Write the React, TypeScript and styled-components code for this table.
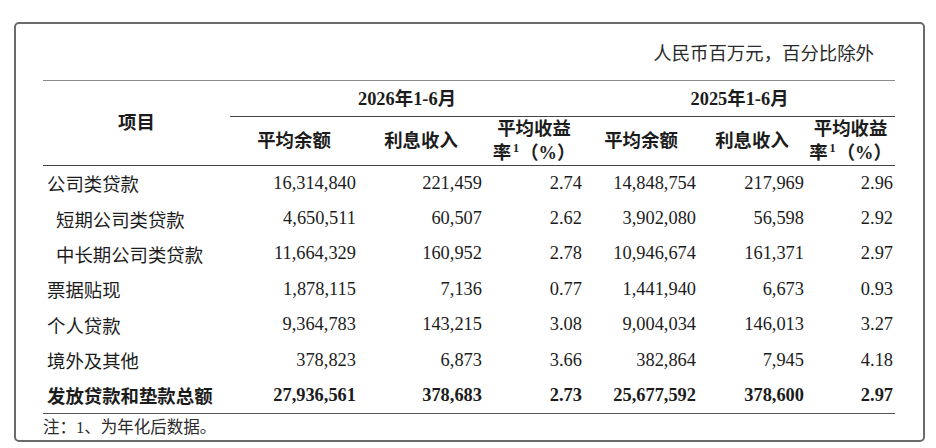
import React from "react";
import styled, { createGlobalStyle } from "styled-components";

interface Row {
  label: string;
  indent?: boolean;
  total?: boolean;
  values: string[];
}

const rows: Row[] = [
  { label: "公司类贷款", values: ["16,314,840", "221,459", "2.74", "14,848,754", "217,969", "2.96"] },
  { label: "短期公司类贷款", indent: true, values: ["4,650,511", "60,507", "2.62", "3,902,080", "56,598", "2.92"] },
  { label: "中长期公司类贷款", indent: true, values: ["11,664,329", "160,952", "2.78", "10,946,674", "161,371", "2.97"] },
  { label: "票据贴现", values: ["1,878,115", "7,136", "0.77", "1,441,940", "6,673", "0.93"] },
  { label: "个人贷款", values: ["9,364,783", "143,215", "3.08", "9,004,034", "146,013", "3.27"] },
  { label: "境外及其他", values: ["378,823", "6,873", "3.66", "382,864", "7,945", "4.18"] },
  { label: "发放贷款和垫款总额", total: true, values: ["27,936,561", "378,683", "2.73", "25,677,592", "378,600", "2.97"] },
];

const colWidths = [187, 128, 126, 100, 114, 108, 89];

const App: React.FC = () => {
  return (
    <>
      <GlobalStyle />
      <Frame>
        <Caption>人民币百万元，百分比除外</Caption>
        <Table>
          <colgroup>
            {colWidths.map((w, i) => (
              <col key={i} style={{ width: w }} />
            ))}
          </colgroup>
          <thead>
            <tr>
              <HeadCell rowSpan={2}>项目</HeadCell>
              <PeriodCell colSpan={3}>2026年1-6月</PeriodCell>
              <PeriodCell colSpan={3}>2025年1-6月</PeriodCell>
            </tr>
            <SubHeadRow>
              {[0, 1].map((k) => (
                <React.Fragment key={k}>
                  <HeadCell>平均余额</HeadCell>
                  <HeadCell>利息收入</HeadCell>
                  <HeadCell>
                    平均收益
                    <br />
                    率<Sup>1</Sup>（%）
                  </HeadCell>
                </React.Fragment>
              ))}
            </SubHeadRow>
          </thead>
          <tbody>
            {rows.map((r) => (
              <BodyRow key={r.label} $total={r.total}>
                <LabelCell $indent={r.indent}>{r.label}</LabelCell>
                {r.values.map((v, i) => (
                  <NumCell key={i}>{v}</NumCell>
                ))}
              </BodyRow>
            ))}
          </tbody>
        </Table>
        <Note>注：1、为年化后数据。</Note>
      </Frame>
    </>
  );
};

const GlobalStyle = createGlobalStyle`
  html, body {
    margin: 0;
    padding: 0;
    background: #ffffff;
  }
  body {
    font-family: "Liberation Serif", "Noto Sans CJK SC", serif;
    color: #1c1c1c;
  }
`;

const Frame = styled.div`
  box-sizing: border-box;
  margin: 22px 0 0 14px;
  width: 911px;
  height: 420px;
  border: 2.5px solid #6a6a6a;
  border-radius: 5px;
  padding: 0 25px 0 27px;
`;

const Caption = styled.div`
  box-sizing: border-box;
  height: 56px;
  padding: 18px 24px 0 0;
  text-align: right;
  font-size: 18.4px;
  line-height: 24px;
  color: #2a2a2a;
`;

const Table = styled.table`
  width: 852px;
  table-layout: fixed;
  border-collapse: collapse;
  border-top: 1.5px solid #8a8a8a;
  border-bottom: 1px solid #555555;
  font-size: 18.4px;
`;

const HeadCell = styled.th`
  padding: 0;
  font-weight: 700;
  text-align: center;
  vertical-align: middle;
  line-height: 24px;
`;

const PeriodCell = styled(HeadCell)`
  height: 35px;
  border-bottom: 1px solid #444444;
`;

const SubHeadRow = styled.tr`
  height: 49px;
  border-bottom: 1px solid #444444;
`;

const Sup = styled.sup`
  font-size: 0.66em;
  line-height: 0;
  vertical-align: 0.55em;
  margin: 0 1px 0 2px;
`;

const BodyRow = styled.tr<{ $total?: boolean }>`
  height: 35.4px;
  font-weight: ${(p) => (p.$total ? 700 : 400)};
`;

const LabelCell = styled.td<{ $indent?: boolean }>`
  padding: 0 0 0 ${(p) => (p.$indent ? "13px" : "4px")};
  text-align: left;
  white-space: nowrap;
`;

const NumCell = styled.td`
  padding: 0 2px 0 0;
  text-align: right;
  white-space: nowrap;
`;

const Note = styled.div`
  padding: 3px 0 0 0;
  font-size: 16.5px;
  line-height: 22px;
  color: #2a2a2a;
`;

export default App;
